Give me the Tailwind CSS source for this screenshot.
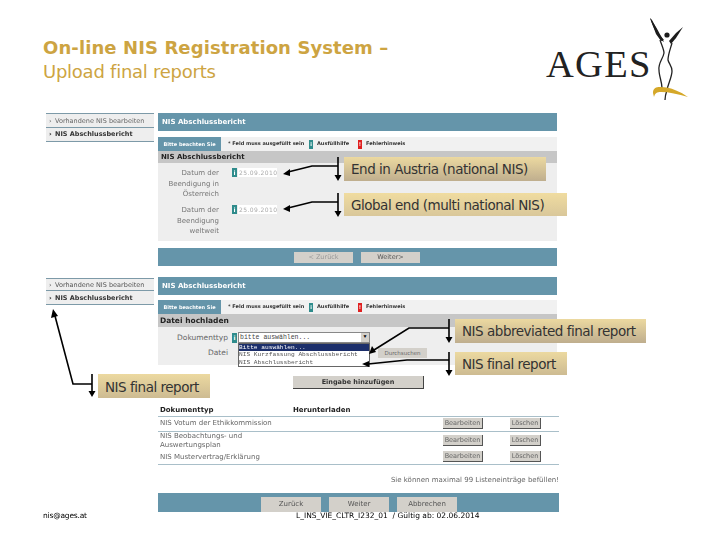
<!DOCTYPE html>
<html lang="de">
<head>
<meta charset="utf-8">
<script src="https://cdn.jsdelivr.net/npm/@tailwindcss/browser@4"></script>
<title>On-line NIS Registration System</title>
</head>
<body class="bg-white">
<div class="relative w-[720px] h-[540px] overflow-hidden bg-white font-['DejaVu_Sans',sans-serif]">

  <!-- Title -->
  <header class="h-[113px] pl-[43px] pt-[37px] text-[#cda442]">
    <h1 class="text-[18px] leading-[22px] font-bold tracking-[0.1px] whitespace-nowrap">On-line NIS Registration System –</h1>
    <p class="text-[18px] leading-[26px] tracking-[-0.25px] whitespace-nowrap">Upload final reports</p>
  </header>

  <!-- Logo -->
  <div class="absolute left-[545px] top-[14px] w-[150px] h-[90px]">
    <span class="absolute left-[1px] top-[28px] font-['Liberation_Serif',serif] text-[38.5px] leading-[44px] tracking-[1.3px] text-[#222]">AGES</span>
    <svg class="absolute left-0 top-0" width="150" height="90" viewBox="0 0 150 90">
      <path d="M105 4 C107 10 110 17 113 21 C115 25 117 27 119 28 C116 22 111 12 105 4Z" fill="#1c1c1c"/>
      <path d="M105 4 L107 6 L114 20 L119 26 L116 27 L111 20Z" fill="#1c1c1c"/>
      <path d="M138 13 L131 19 L124 27 L126 30 L131 24Z" fill="#1c1c1c"/>
      <circle cx="122" cy="21" r="2.6" fill="#1c1c1c"/>
      <path d="M115 26 C117 32 119 36 119 39 C118 45 113 49 114 56 C114 62 117 68 117 74" fill="none" stroke="#222" stroke-width="1.3"/>
      <path d="M127 29 C125 36 123 41 123 46 C124 50 127 52 127 57 C127 63 123 70 122 76 C121 79 120 82 120 86" fill="none" stroke="#222" stroke-width="1.3"/>
      <path d="M108 79 C108 74 111 73 115 73 C126 73 136 78 143 83 C133 80 124 78 116 78 C112 78 110 79 109 83Z" fill="#d5a829"/>
    </svg>
  </div>

  <main class="pl-[46px] font-['DejaVu_Sans',sans-serif] blur-[0.4px]">
    <!-- First screen -->
    <section class="flex gap-[4px] h-[128px]">
      <nav class="w-[108px] text-[6.5px] leading-[13px] text-[#666]">
        <div class="h-[15px] pl-[3px] pt-[1px] bg-[#eeeeee] border-t border-b border-[#7d9aa8]"><span class="inline-block w-[6px]">›</span>Vorhandene NIS bearbeiten</div>
        <div class="h-[14px] pl-[3px] bg-[#eeeeee] border-b border-[#7d9aa8] font-bold text-[#333]"><span class="inline-block w-[6px]">›</span>NIS Abschlussbericht</div>
      </nav>
      <div class="w-[399px]">
        <div class="h-[18px] pl-[4px] bg-[#6595aa] text-white font-bold text-[7px] leading-[18px]">NIS Abschlussbericht</div>
        <div class="mt-[6px] h-[14px] flex items-center bg-[#f1f1f1] text-[5px] font-bold text-[#333]">
          <span class="w-[63px] h-full bg-[#6595aa] text-white text-center leading-[14px]">Bitte beachten Sie</span>
          <span class="ml-[7px] w-[81px]">* Feld muss ausgefüllt sein</span>
          <span class="w-[4px] h-[9px] bg-[#2f8c8c] mr-[4px] text-white text-center leading-[9px]">i</span>
          <span class="w-[41px]">Ausfüllhilfe</span>
          <span class="w-[4px] h-[9px] bg-[#e02020] mr-[4px] text-white text-center leading-[9px]">!</span>
          <span>Fehlerhinweis</span>
        </div>
        <div class="h-[12px] pl-[3px] bg-[#c6c6c6] text-[7px] leading-[12px] font-bold text-[#222]">NIS Abschlussbericht</div>
        <div class="h-[78px] bg-[#eeeeee] pt-[5px] text-[7px] leading-[10.5px] text-[#777]">
          <div class="flex h-[37px]">
            <p class="w-[61px] text-right">Datum der<br>Beendigung in<br>Österreich</p>
            <span class="ml-[13px] w-[5px] h-[9px] bg-[#2f8c8c] text-white text-center font-bold text-[6px] leading-[9px]">i</span>
            <span class="ml-[1px] w-[39px] h-[9px] bg-white text-[6px] leading-[9px] text-[#aaa] tracking-[0.4px] pl-[1px]">25.09.2010</span>
          </div>
          <div class="flex">
            <p class="w-[61px] text-right">Datum der<br>Beendigung<br>weltweit</p>
            <span class="ml-[13px] w-[5px] h-[9px] bg-[#2f8c8c] text-white text-center font-bold text-[6px] leading-[9px]">i</span>
            <span class="ml-[1px] w-[39px] h-[9px] bg-white text-[6px] leading-[9px] text-[#aaa] tracking-[0.4px] pl-[1px]">25.09.2010</span>
          </div>
        </div>
      </div>
    </section>

    <!-- Bottom bar of first screen -->
    <div class="ml-[112px] mt-[7px] w-[399px] h-[18px] bg-[#6595aa] flex items-center gap-[8px] pl-[136px] text-[6.5px] text-center">
      <span class="w-[59px] h-[11px] bg-[#d3d0ca] text-[#999] leading-[11px]">&lt; Zurück</span>
      <span class="w-[59px] h-[11px] bg-[#d3d0ca] text-[#555] leading-[11px]">Weiter&gt;</span>
    </div>

    <!-- Second screen -->
    <section class="mt-[11px] flex gap-[4px]">
      <nav class="w-[108px] text-[6.5px] leading-[12px] text-[#555]">
        <div class="mt-[1px] h-[13px] pl-[3px] bg-[#eeeeee] border-t border-b border-[#7d9aa8]"><span class="inline-block w-[6px]">›</span>Vorhandene NIS bearbeiten</div>
        <div class="h-[14px] pl-[3px] pt-[1px] bg-[#eeeeee] border-b border-[#7d9aa8] font-bold text-[#333]"><span class="inline-block w-[6px]">›</span>NIS Abschlussbericht</div>
      </nav>
      <div class="relative w-[401px]">
        <div class="w-[399px] h-[18px] pl-[4px] bg-[#6595aa] text-white font-bold text-[7px] leading-[18px]">NIS Abschlussbericht</div>
        <div class="mt-[5px] w-[399px] h-[14px] flex items-center bg-[#f1f1f1] text-[5px] font-bold text-[#333]">
          <span class="w-[63px] h-full bg-[#6595aa] text-white text-center leading-[14px]">Bitte beachten Sie</span>
          <span class="ml-[7px] w-[81px]">* Feld muss ausgefüllt sein</span>
          <span class="w-[4px] h-[9px] bg-[#2f8c8c] mr-[4px] text-white text-center leading-[9px]">i</span>
          <span class="w-[41px]">Ausfüllhilfe</span>
          <span class="w-[4px] h-[9px] bg-[#e02020] mr-[4px] text-white text-center leading-[9px]">!</span>
          <span>Fehlerhinweis</span>
        </div>
        <div class="w-[399px] h-[13px] pl-[2px] bg-[#c6c6c6] text-[7.5px] leading-[13px] font-bold text-[#222]">Datei hochladen</div>

        <div class="relative w-[399px] h-[38px] bg-[#eeeeee] text-[7.5px] text-[#666]">
          <div class="flex items-center pt-[5px]">
            <span class="w-[70px] text-right">Dokumenttyp</span>
            <span class="ml-[4px] w-[5px] h-[10px] bg-[#2f8c8c] text-white text-center font-bold text-[6px] leading-[10px]">i</span>
            <span class="ml-[1px] w-[132px] h-[11px] bg-white border border-[#888] font-['Liberation_Mono',monospace] text-[6.5px] leading-[9px] text-[#444] pl-[1px] flex justify-between">bitte auswählen...<span class="w-[8px] h-[9px] bg-[#d3d0ca] text-[5px] text-center text-black">▼</span></span>
          </div>
          <div class="flex items-center mt-[4px]">
            <span class="w-[70px] text-right">Datei</span>
            <span class="ml-[150px] w-[49px] h-[10px] bg-[#d3d0ca] text-[5.5px] leading-[10px] text-center text-[#666]">Durchsuchen</span>
          </div>
          <ul class="absolute left-[80px] top-[16px] w-[132px] h-[24px] bg-white border border-[#666] font-['Liberation_Mono',monospace] text-[6.2px] leading-[7.3px] text-[#555] whitespace-nowrap overflow-hidden">
            <li class="bg-[#1c2f6b] text-white">Bitte auswählen...</li>
            <li>NIS Kurzfassung Abschlussbericht</li>
            <li>NIS Abschlussbericht</li>
          </ul>
        </div>

        <div class="mt-[11px] ml-[135px] w-[131px] h-[13px] bg-[#d3d0ca] border-r border-b border-[#444] text-[6.5px] leading-[13px] text-center font-bold text-[#333]">Eingabe hinzufügen</div>

        <table class="mt-[15px] w-[401px] table-fixed text-[7px] text-[#666]">
          <thead>
            <tr class="h-[12px] border-b border-[#a9bfc9] text-left text-[#222]">
              <th class="w-[135px] pl-[2px] font-bold text-[7px]">Dokumenttyp</th>
              <th class="w-[150px] font-bold text-[7px]">Herunterladen</th>
              <th class="w-[67px]"></th>
              <th></th>
            </tr>
          </thead>
          <tbody>
            <tr class="h-[15px] border-b border-[#a9bfc9]">
              <td class="pl-[2px] whitespace-nowrap">NIS Votum der Ethikkommission</td>
              <td></td>
              <td><span class="block w-[40px] h-[11px] bg-[#d3d0ca] border-r border-b border-[#555] text-[6.5px] leading-[10px] text-center">Bearbeiten</span></td>
              <td><span class="block w-[31px] h-[11px] bg-[#d3d0ca] border-r border-b border-[#555] text-[6.5px] leading-[10px] text-center">Löschen</span></td>
            </tr>
            <tr class="h-[19px]">
              <td class="pl-[2px] leading-[8.5px]">NIS Beobachtungs- und<br>Auswertungsplan</td>
              <td></td>
              <td><span class="block w-[40px] h-[11px] bg-[#d3d0ca] border-r border-b border-[#555] text-[6.5px] leading-[10px] text-center">Bearbeiten</span></td>
              <td><span class="block w-[31px] h-[11px] bg-[#d3d0ca] border-r border-b border-[#555] text-[6.5px] leading-[10px] text-center">Löschen</span></td>
            </tr>
            <tr class="h-[14px] border-b border-[#a9bfc9]">
              <td class="pl-[2px] whitespace-nowrap">NIS Mustervertrag/Erklärung</td>
              <td></td>
              <td><span class="block w-[40px] h-[11px] bg-[#d3d0ca] border-r border-b border-[#555] text-[6.5px] leading-[10px] text-center">Bearbeiten</span></td>
              <td><span class="block w-[31px] h-[11px] bg-[#d3d0ca] border-r border-b border-[#555] text-[6.5px] leading-[10px] text-center">Löschen</span></td>
            </tr>
          </tbody>
        </table>

        <p class="mt-[10px] h-[18px] text-right text-[7px] text-[#666] whitespace-nowrap">Sie können maximal 99 Listeneinträge befüllen!</p>

        <div class="h-[19px] bg-[#6595aa] flex items-end gap-[8px] pl-[103px] text-[7px] text-center text-[#555]">
          <span class="w-[60px] h-[15px] bg-[#d3d0ca] leading-[15px]">Zurück</span>
          <span class="w-[60px] h-[15px] bg-[#d3d0ca] leading-[15px]">Weiter</span>
          <span class="w-[60px] h-[15px] bg-[#d3d0ca] leading-[15px]">Abbrechen</span>
        </div>
      </div>
    </section>
  </main>

  <!-- Footer -->
  <footer class="absolute left-[43px] top-[510px] w-[440px] h-[11px] flex text-[7.5px] leading-[11px] text-black whitespace-nowrap">
    <span class="w-[253px] tracking-[-0.2px]">nis@ages.at</span>
    <span>L_INS_VIE_CLTR_I232_01 &nbsp;/ Gültig ab: 02.06.2014</span>
  </footer>

  <!-- Callouts -->
  <div class="absolute left-[344px] top-[157px] w-[202px] h-[24px] pl-[7px] bg-gradient-to-b from-[#ecd9a0] to-[#bfae8e] text-[13.5px] tracking-[-0.48px] leading-[25px] text-[#333] whitespace-nowrap">End in Austria (national NIS)</div>
  <div class="absolute left-[344px] top-[193px] w-[223px] h-[23px] pl-[7px] bg-gradient-to-b from-[#f0dca0] to-[#d9c79a] text-[13.5px] tracking-[-0.48px] leading-[25px] text-[#333] whitespace-nowrap">Global end (multi national NIS)</div>
  <div class="absolute left-[455px] top-[319px] w-[191px] h-[24px] pl-[7px] bg-gradient-to-b from-[#ecd9a0] to-[#bfae8e] text-[13.5px] tracking-[-0.48px] leading-[25px] text-[#333] whitespace-nowrap">NIS abbreviated final report</div>
  <div class="absolute left-[455px] top-[352px] w-[112px] h-[23px] pl-[7px] bg-gradient-to-b from-[#ecd9a0] to-[#cdbb92] text-[13.5px] tracking-[-0.48px] leading-[24px] text-[#333] whitespace-nowrap">NIS final report</div>
  <div class="absolute left-[98px] top-[374px] w-[112px] h-[24px] pl-[7px] bg-gradient-to-b from-[#ecd9a0] to-[#cdbb92] text-[13.5px] tracking-[-0.48px] leading-[26px] text-[#333] whitespace-nowrap">NIS final report</div>

  <!-- Arrows -->
  <svg class="absolute left-0 top-0 pointer-events-none" width="720" height="540" viewBox="0 0 720 540" fill="none" stroke="#000" stroke-width="1.6">
    <path d="M338 157V177M338 166H312L288 172"/><path d="M334.500 175H341.500L338 181Z M290 169L290 176L283 174Z" fill="#000" stroke="none"/>
    <path d="M338 193V212M338 202H312L288 208"/><path d="M334.500 211H341.500L338 217Z M290 205L290 212L283 209Z" fill="#000" stroke="none"/>
    <path d="M449 319V338M449 328H409L374 350"/><path d="M445.500 337H452.500L449 343Z M372 346L376 352L369 354Z" fill="#000" stroke="none"/>
    <path d="M449 352V371M449 360H407L368 364"/><path d="M445.500 370H452.500L449 376Z M369 361L369 367L362 364Z" fill="#000" stroke="none"/>
    <path d="M92 374V392M92 384H73L55 316"/><path d="M88.500 391H95.500L92 397Z M51 318L58 316L53 309Z" fill="#000" stroke="none"/>
  </svg>
</div>
</body>
</html>
